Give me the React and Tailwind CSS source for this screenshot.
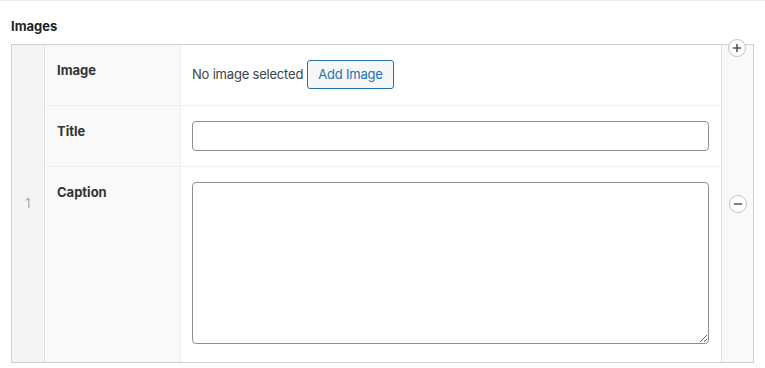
import React from "react";

function Circle({ children }) {
  return (
    <span className="flex h-[18px] w-[18px] items-center justify-center rounded-full border border-[#c3c4c7] bg-white text-[#555]">
      {children}
    </span>
  );
}

export default function App() {
  const font = { fontFamily: "Inter, 'Noto Sans', sans-serif" };
  return (
    <div className="min-h-[368px] w-[765px] border-t border-[#eeeeee] bg-white text-[13px] text-[#3c434a]" style={font}>
      <div className="px-[11px] pt-[15px] pb-[8px] text-[13px] font-bold leading-[20px] text-[#1d2327]">Images</div>
      <div className="mx-[11px] flex border border-[#ccd0d4]">
        {/* order column */}
        <div className="flex w-[33px] items-center justify-center border-r border-[#e1e1e1] bg-[#f4f4f4] text-[13px] text-[#aaaaaa]">
          1
        </div>
        {/* fields */}
        <div className="flex flex-1 flex-col">
          <div className="flex h-[61px] border-b border-[#eeeeee]">
            <div className="w-[136px] border-r border-[#eeeeee] bg-[#f9f9f9] px-[12px] pt-[15px] font-bold leading-[20px] text-[#333333]">Image</div>
            <div className="flex flex-1 items-start pl-[11px] pr-[12px] pt-[15px]">
              <div className="flex items-center gap-[4px] tracking-[-0.2px]">
                <span className="text-[#3c434a]">No image selected</span>
                <button className="h-[29px] rounded-[3px] border border-[#2271b1] bg-[#f6f7f7] px-[10px] text-[13px] tracking-[-0.2px] text-[#2271b1]">Add Image</button>
              </div>
            </div>
          </div>
          <div className="flex h-[61px] border-b border-[#eeeeee]">
            <div className="w-[136px] border-r border-[#eeeeee] bg-[#f9f9f9] px-[12px] pt-[15px] font-bold leading-[20px] text-[#333333]">Title</div>
            <div className="flex-1 pl-[11px] pr-[12px] pt-[15px]">
              <input className="block h-[30px] w-full rounded-[4px] border border-[#8c8f94] bg-white px-2" />
            </div>
          </div>
          <div className="flex h-[195px]">
            <div className="w-[136px] border-r border-[#eeeeee] bg-[#f9f9f9] px-[12px] pt-[15px] font-bold leading-[20px] text-[#333333]">Caption</div>
            <div className="flex-1 pl-[11px] pr-[12px] pt-[15px]">
              <textarea className="block h-[162px] w-full rounded-[4px] border border-[#8c8f94] bg-white p-2" />
            </div>
          </div>
        </div>
        {/* remove column */}
        <div className="relative flex w-[32px] items-center justify-center border-l border-[#e1e1e1] bg-[#f9f9f9]">
          <div className="absolute left-[6px] top-[-6px]">
            <Circle>
              <svg width="10" height="10" viewBox="0 0 10 10"><path d="M5 1.5v7M1.5 5h7" stroke="#555" strokeWidth="1.6" strokeLinecap="round" /></svg>
            </Circle>
          </div>
          <Circle>
            <svg width="10" height="10" viewBox="0 0 10 10"><path d="M1.5 5h7" stroke="#555" strokeWidth="1.6" strokeLinecap="round" /></svg>
          </Circle>
        </div>
      </div>
    </div>
  );
}
